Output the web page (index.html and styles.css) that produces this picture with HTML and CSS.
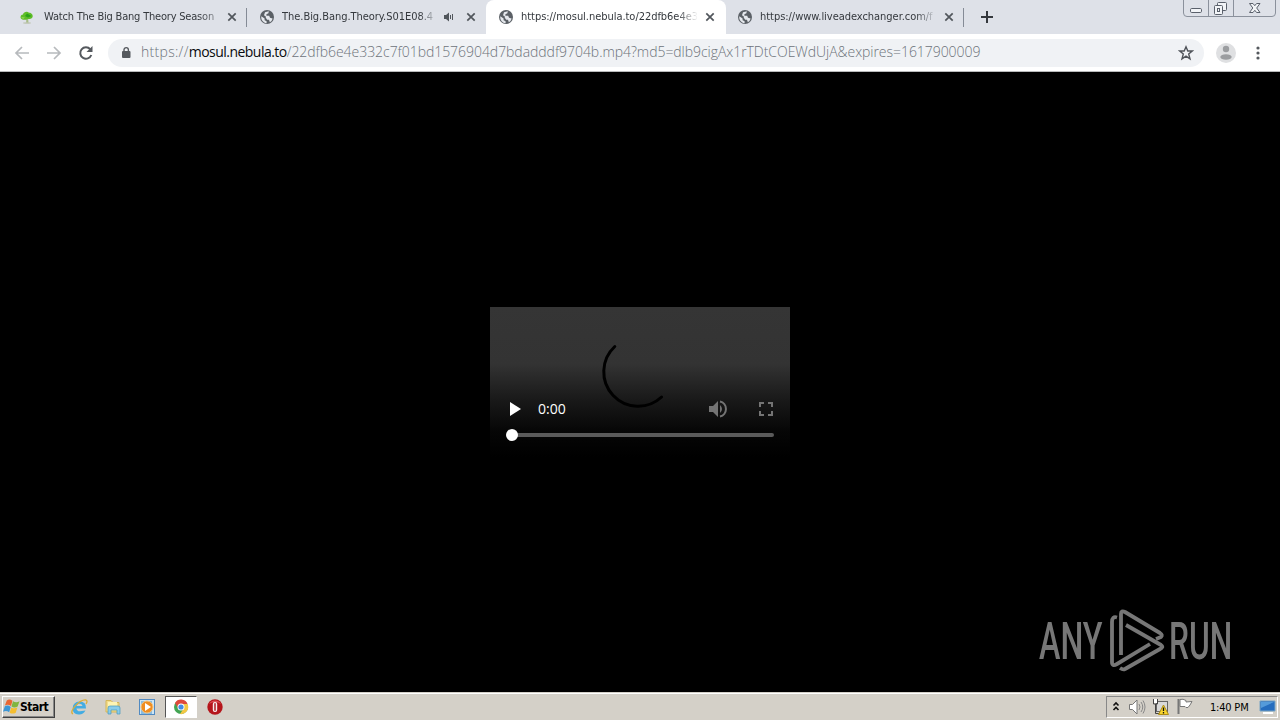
FILE: index.html
```
<!DOCTYPE html>
<html lang="en">
<head>
<meta charset="utf-8">
<title>mosul.nebula.to</title>
<link rel="stylesheet" href="styles.css">
</head>
<body>
<svg width="0" height="0" class="defs">
  <defs>
    <symbol id="globe" viewBox="0 0 16 16"><circle cx="8" cy="8" r="7" fill="#5b6066"/><path d="M2.3 7.2L5.6 9.4V11.2L7.6 12.2V14.2C4.4 13.8 1.8 11 2.3 7.2ZM6 3.2L9.8 2.2L9.4 4.3L7.4 5.2V6.8H10.2L11 8.800L13.600 9.400C13 11.800 11.700 12.800 10.800 13.200L10 10.800H8.200L6.800 8.800V7.400L5 6.200Z" fill="#e5e8ed"/></symbol>
    <symbol id="close" viewBox="0 0 10 10"><path d="M1.3 1.3L8.7 8.7M8.7 1.3L1.3 8.7" stroke="#51565c" stroke-width="1.7"/></symbol>
  </defs>
</svg>
<div class="screen">
  <header class="tabs">
    <div class="tab">
      <svg class="fav" viewBox="0 0 16 16"><ellipse cx="8" cy="14" rx="4" ry="1" fill="#c5cabd"/><path d="M7.3 8H9L9.5 13.5H7.2Z" fill="#a8bc87"/><path d="M1.5 8.5C1.5 6 3 5.6 4 5.5C4.5 2.6 8.5 1.8 10 3.7C12.5 3.5 14.5 6 13.5 8.3C12 10.6 9.5 9.8 8.5 10.3C5.5 11.3 2 11 1.5 8.5Z" fill="#5fbd28"/><path d="M8 4.500L12.500 7L9 8.500L6 7Z" fill="#2ba318"/><path d="M2 8L6 8.5L4 10Z" fill="#93d856"/></svg>
      <span class="title first-title">Watch The Big Bang Theory Season</span>
      <svg class="close"><use href="#close"/></svg>
    </div>
    <div class="tab second">
      <svg class="fav"><use href="#globe"/></svg>
      <span class="title audio-title">The.Big.Bang.Theory.S01E08.4</span>
      <svg class="speaker" viewBox="0 0 12 12"><path d="M1 4H3L6 1.5V10.5L3 8H1Z" fill="#51565c"/><path d="M7.5 4V8M9.5 3V9" stroke="#51565c"/></svg>
      <svg class="close"><use href="#close"/></svg>
    </div>
    <div class="tab active">
      <svg class="fav"><use href="#globe"/></svg>
      <span class="title url-title">https://mosul.nebula.to/22dfb6e4e3</span>
      <svg class="close"><use href="#close"/></svg>
    </div>
    <div class="tab last">
      <svg class="fav"><use href="#globe"/></svg>
      <span class="title exchange">https://www.liveadexchanger.com/f</span>
      <svg class="close"><use href="#close"/></svg>
    </div>
    <svg class="plus" viewBox="0 0 14 14"><path d="M7 1V13M1 7H13" stroke="#34383d" stroke-width="2"/></svg>
    <svg class="controls" viewBox="0 0 94 18"><path d="M.5 0V13Q.5 16.5 4 16.5H89Q92.500 16.500 92.500 13V0M25.500 0V16M50.500 0V16" fill="none" stroke="#8b919c"/><g fill="#f2f4f7" stroke="#5a606b"><rect x="7.500" y="8.500" width="11" height="4" rx="1.200"/><rect x="34.500" y="2.500" width="9" height="8" rx="1"/><rect x="31.500" y="5.500" width="8" height="9" rx="1"/><rect x="34.500" y="8.500" width="2" height="3"/></g><path d="M66.500 3.500H70L71.800 5.700L73.600 3.500H77L73.700 8L77 12.500H73.600L71.800 10.300L70 12.500H66.500L69.800 8Z" fill="#f2f4f7" stroke="#5a606b"/></svg>
  </header>
  <nav class="toolbar">
    <svg class="nav" viewBox="0 0 16 16"><path d="M15 8H2M8 2L2 8L8 14" fill="none" stroke="#b7babd" stroke-width="1.700"/></svg>
    <svg class="nav" viewBox="0 0 16 16"><path d="M1 8H14M8 2L14 8L8 14" fill="none" stroke="#b7babd" stroke-width="1.700"/></svg>
    <svg class="nav" viewBox="0 0 16 16"><path d="M13.300 10A5.700 5.700 0 1 1 12.300 4.300" fill="none" stroke="#55595e" stroke-width="2"/><path d="M14.500 1V7H8.500Z" fill="#55595e"/></svg>
    <div class="address">
      <svg class="lock" viewBox="0 0 10 14"><rect x="1" y="5" width="8.500" height="7" rx="1" fill="#55595e"/><path d="M3 6V3.800A2.200 2.200 0 0 1 7.400 3.800V6" fill="none" stroke="#55595e" stroke-width="1.400"/></svg>
      <div class="url"><span class="scheme">https://</span><span class="host">mosul.nebula.to</span><span class="path">/22dfb6e4e332c7f01bd1576904d7bdadddf9704b.mp4?md5=dlb9cigAx1rTDtCOEWdUjA&amp;expires=1617900009</span></div>
      <svg class="star" viewBox="0 0 16 16"><path d="M8 1.800L9.800 6H14.200L10.700 8.900L12 13.800L8 11.200L4 13.800L5.300 8.900L1.800 6H6.200Z" fill="none" stroke="#50545a" stroke-width="1.400"/></svg>
    </div>
    <svg class="avatar" viewBox="0 0 20 20"><circle cx="10" cy="10" r="10" fill="#dfe0e2"/><circle cx="10" cy="6" r="3.200" fill="#9b9da0"/><ellipse cx="10" cy="14" rx="5.700" ry="2.800" fill="#9b9da0"/></svg>
    <svg class="dots" viewBox="0 0 4 14"><g fill="#55595e"><circle cx="2" cy="2" r="1.600"/><circle cx="2" cy="7" r="1.600"/><circle cx="2" cy="12" r="1.600"/></g></svg>
  </nav>
  <main class="content">
    <section class="video">
      <svg class="spinner" viewBox="0 0 72 72"><path d="M10.800 12.500A34.400 34.400 0 0 0 57.600 63" fill="none" stroke="#000" stroke-width="3" stroke-linecap="round"/></svg>
      <div class="player-controls">
        <svg class="play" viewBox="0 0 11 14"><path d="M0 0V14L11 7Z" fill="#fff"/></svg>
        <span class="time">0:00</span>
        <svg class="volume" viewBox="0 0 20 20"><path d="M1 7H5L10 2V18L5 13H1Z" fill="#747474"/><path d="M12 6Q16 10 12 14Z" fill="#747474"/><path d="M12 2.500A7.700 7.700 0 0 1 12 17.500" fill="none" stroke="#747474" stroke-width="2"/></svg>
        <svg class="full" viewBox="0 0 14 14"><path d="M1 5V1H5M9 1H13V5M13 9V13H9M5 13H1V9" fill="none" stroke="#747474" stroke-width="2"/></svg>
      </div>
      <div class="track"><span class="thumb"></span></div>
    </section>
    <div class="brand">
      <span class="brand-text"><span class="any">ANY</span></span>
      <svg class="logo" viewBox="0 0 58 64"><g fill="none" stroke="#777" stroke-width="3.800" stroke-linejoin="round"><path d="M12 47V6Q12 2 16 4L51 25Q54 27 52 29L47 31"/><path d="M8 9.500Q3 8 3 14V54Q3 59 8 56L41 36"/><path d="M17 17L52 37Q55 39 51 41L16 61Q14 62 11 60"/></g></svg>
      <span class="brand-text run-box"><span class="run">RUN</span></span>
    </div>
  </main>
  <footer class="taskbar">
    <div class="start"><svg class="flag" viewBox="0 0 18 18"><path d="M4 2Q7 0 10 2.500L8.500 8Q5 5.500 2 7.500Z" fill="#e96632"/><path d="M10.600 3Q14 5 17.500 3L15.500 8.500Q12 10.500 9 8.500Z" fill="#80b540"/><path d="M2 8.300Q5 6.300 8.200 9L6.500 14.500Q3.500 12 0 14Z" fill="#3c96d5"/><path d="M8.800 9.400Q12 11.300 15.200 9.500L13.500 15Q10 17 7 15Z" fill="#f5be30"/></svg><span class="start-text">Start</span></div>
    <div class="apps">
      <svg viewBox="0 0 18 18"><path fill-rule="evenodd" d="M16 10.500H6.500Q7 13.500 10 13.300L15.500 12.500Q13 17 8.500 16.500Q2.500 16 2.700 10Q3 4 9.500 3.500Q16.500 3.500 16 10.500ZM6.500 8H12.500Q12 5.700 9.500 5.700Q7 5.700 6.500 8Z" fill="#43ace2"/><path d="M3 16C-2 14 10 1 16 2Q18 3 16 6" fill="none" stroke="#dbad37" stroke-width="1.300"/></svg>
      <svg viewBox="0 0 18 18"><path d="M2 2.500H7L9 4.500H15V14H2Z" fill="#f3dc8b" stroke="#d4b659"/><path d="M4 4H13V8H4Z" fill="#fff4b2"/><path d="M4 16V10Q4 8 6 8H14Q16 8 16 10V16H13V12H7V16Z" fill="#8accea" stroke="#4698bd" stroke-width=".7"/></svg>
      <svg viewBox="0 0 18 18"><rect x="1.500" y="1.500" width="15" height="15" fill="#cde5f4" stroke="#518ac1"/><rect x="3" y="3" width="11" height="13" fill="#87bce3"/><circle cx="9" cy="9" r="6" fill="#ef8d20" stroke="#f7c47e"/><path d="M7 5V13L13 9Z" fill="#fff"/></svg>
      <div class="selected"><svg viewBox="0 0 18 18"><circle cx="9" cy="9" r="7" fill="#43a553"/><path d="M3 5A7 7 0 0 1 15.500 6H9L6 10Z" fill="#df493b"/><path d="M9 6H15.500A7 7 0 0 1 8 16L12 10Z" fill="#f3c744"/><circle cx="9" cy="9" r="3.500" fill="#fff"/><circle cx="9" cy="9" r="2.600" fill="#438ce5"/></svg></div>
      <svg viewBox="0 0 18 18"><circle cx="9" cy="9" r="7.700" fill="#b5151b"/><path d="M3 6A7 7 0 0 1 15 6Q9 2 3 6Z" fill="#df5358"/><rect x="6.800" y="4" width="4.400" height="10" rx="2" fill="#f8eeee"/><rect x="8.300" y="5" width="1.400" height="8" rx=".7" fill="#aa1018"/></svg>
    </div>
    <div class="tray">
      <svg class="chevron" viewBox="0 0 8 12"><path d="M1.500 4.500L4 2L6.500 4.500M1.500 9L4 6.500L6.500 9" fill="none" stroke="#111" stroke-width="1.600"/></svg>
      <svg class="sound" viewBox="0 0 18 18"><path d="M1.500 6.500H4.500L9 2V16L4.500 11.500H1.500Z" fill="#fff" stroke="#777"/><path d="M11 6Q13 9 11 12M13 4Q16.500 9 13 14M15 2.500Q19 9 15 15.500" fill="none" stroke="#888"/></svg>
      <svg class="network" viewBox="0 0 18 18"><rect x="4.500" y="3.500" width="11" height="10" fill="#d9d9d9" stroke="#666"/><path d="M1.500 1V6H5.500V1M3.500 6V15.500H11" fill="none" stroke="#444"/><path d="M2 1V5H5V1Z" fill="#fff"/><path d="M11.500 7L16.500 16.500H6.500Z" fill="#f8d52d" stroke="#ae8d16"/><path d="M11.500 9.500V13M11.500 14V15.500" stroke="#111" stroke-width="1.300"/></svg>
      <svg class="notice" viewBox="0 0 18 18"><path d="M2.500 1V16" stroke="#777" stroke-width="2"/><path d="M4 1.500Q7 .5 10 2.500V4L16 3.500L14 7L12 9.500H10L9 8.500H4Z" fill="#fff" stroke="#777"/></svg>
      <span class="clock">1:40 PM</span>
      <svg class="desktop" viewBox="0 0 18 18"><path d="M1 3H16V13H1Z" fill="#266dbe" stroke="#78a5c5"/><path d="M2 4H15L2 10Z" fill="#559bda"/><path d="M4 15H14" stroke="#fff" stroke-width="2"/></svg>
    </div>
  </footer>
</div>
</body>
</html>
```
FILE: styles.css
```
* { box-sizing: border-box; }
body { margin: 0; overflow: hidden; font-family: "DejaVu Sans Condensed", "DejaVu Sans", sans-serif; font-stretch: condensed; }
svg { display: block; flex: none; }
.defs { position: absolute; }
.screen { width: 1280px; height: 720px; background: #000; display: flex; flex-direction: column; }
.tabs { height: 34px; flex: none; background: #dee1e8; display: flex; padding-left: 8px; }
.tab { width: 240px; height: 34px; display: flex; align-items: center; padding: 0 10px 0 11px; border-right: 1px solid transparent; background: linear-gradient(#858b96,#858b96) right 8px / 1px 19px no-repeat; }
.tab.second { width: 238px; background: none; padding-right: 9px; }
.tab.active { width: 240px; background: #fff; border-radius: 8px 8px 0 0; padding-left: 12px; }
.tab.last { width: 239px; padding-left: 11px; }
.fav { width: 16px; height: 16px; margin-right: 7px; }
.title { font-size: 11px; letter-spacing: -.04px; line-height: 20px; white-space: nowrap; width: 177px; color: #34383d; mask-image: linear-gradient(90deg,#000 88%,transparent); }
.first-title { letter-spacing: -.2px; margin-left: 2px; width: 175px; mask-image: linear-gradient(90deg,#000 88%,#0006); }
.audio-title { width: 156px; }
.close { width: 10px; height: 10px; margin-left: auto; }
.speaker { width: 12px; height: 12px; margin-left: 5px; }
.plus { width: 14px; height: 14px; margin: 10px 0 0 15px; }
.controls { width: 94px; height: 18px; margin-left: auto; margin-right: 3px; }
.toolbar { height: 38px; flex: none; background: #fff; border-bottom: 1px solid #b8b9bb; display: flex; align-items: center; padding-left: 14px; }
.nav { width: 16px; height: 16px; margin-right: 16px; }
.address { width: 1096px; height: 28px; margin-left: -2px; border-radius: 14px; background: #f0f2f5; display: flex; align-items: center; padding: 0 10px 0 13px; }
.lock { width: 10px; height: 14px; margin-right: 10px; }
.url { display: flex; width: 840px; font-size: 14px; line-height: 24px; padding-bottom: 2px; white-space: nowrap; color: #6d737a; font-family: "Open Sans", sans-serif; font-weight: 300; font-stretch: normal; }
.scheme { letter-spacing: .3px; }
.host { color: #090b0e; font-weight: 400; letter-spacing: -.53px; }
.path { letter-spacing: -.045px; }
.star { width: 16px; height: 16px; margin-left: auto; }
.avatar { width: 20px; height: 20px; margin-left: 12px; }
.dots { width: 4px; height: 14px; margin-left: 20px; }
.content { height: 620px; flex: none; display: flex; flex-direction: column; align-items: center; padding-top: 235px; }
.video { width: 300px; height: 150px; flex: none; background: linear-gradient(#353535 0,#333 38%,#1b1b1b 60%,#060606 83%,#000); }
.spinner { width: 72px; height: 72px; margin: 27px auto 0; overflow: visible; }
.player-controls { height: 20px; display: flex; align-items: center; padding: 0 17px 0 20px; margin-top: -7px; }
.play { width: 11px; height: 14px; }
.time { color: #fff; font: 14px "Open Sans", sans-serif; margin-left: 17px; padding-bottom: 2px; }
.volume { width: 20px; height: 20px; margin-left: auto; }
.full { width: 14px; height: 14px; margin-left: 31px; }
.track { width: 262px; height: 4px; margin: 14px 0 0 22px; background: #5a5a5a; border-radius: 3px; display: flex; align-items: center; }
.thumb { width: 12px; height: 12px; border-radius: 50%; background: #fff; margin-left: -6px; flex: none; }
.brand { width: 193px; height: 64px; margin: 151px 48px 0 auto; display: flex; align-items: center; color: #777; }
.brand-text { width: 64px; height: 51px; font: 500 52px/53px "Roboto", sans-serif; flex: none; }
.any, .run { display: block; width: max-content; transform-origin: left center; transform: scaleX(.62); }
.run { transform: scaleX(.61); }
.logo { width: 58px; height: 64px; margin-left: 6px; }
.run-box { margin-left: 2px; }
.taskbar { height: 28px; flex: none; background: #d4d0c8; border-top: 1px solid #d4d0c8; box-shadow: inset 0 1px #fff; display: flex; align-items: center; padding: 1px 2px 0; }
.start { width: 53px; height: 22px; border: 1px solid; border-color: #fff #404040 #404040 #fff; box-shadow: inset -1px -1px #888; display: flex; align-items: center; }
.flag { width: 17px; height: 18px; }
.start-text { font-size: 12px; font-weight: bold; letter-spacing: -.5px; }
.apps { display: flex; align-items: center; margin-left: 15px; gap: 16px; }
.apps svg { width: 18px; height: 18px; }
.selected { width: 32px; height: 22px; background: #fff; border: 1px solid; border-color: #555 #fff #fff #555; display: flex; justify-content: center; align-items: center; margin: 0 -7px 0 -7px; }
.tray { width: 172px; height: 22px; margin-left: auto; border: 1px solid; border-color: #888 #fff #fff #888; display: flex; align-items: center; padding-left: 5px; }
.chevron { width: 8px; height: 12px; }
.sound { width: 18px; height: 18px; margin-left: 8px; }
.network { width: 18px; height: 18px; margin-left: 6px; }
.notice { width: 18px; height: 18px; margin-left: 6px; }
.clock { font-size: 11px; letter-spacing: -.2px; margin-left: 16px; white-space: nowrap; width: 43px; }
.desktop { width: 18px; height: 18px; margin-left: 6px; }
```
